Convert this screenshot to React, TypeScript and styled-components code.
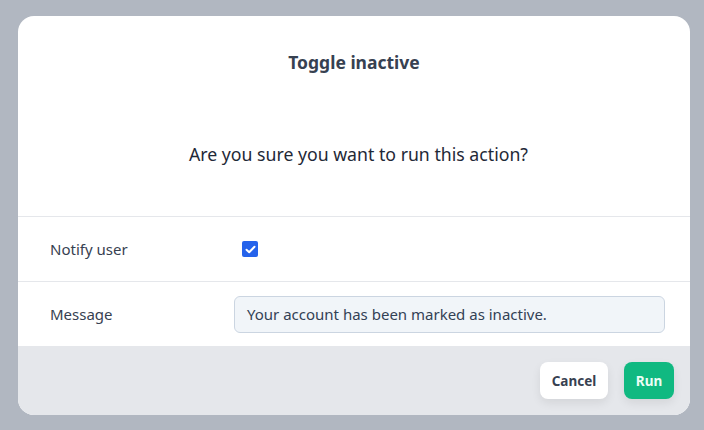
import React from "react";
import styled, { createGlobalStyle } from "styled-components";

const Global = createGlobalStyle`
  html, body { margin: 0; padding: 0; }
  body {
    background: #b1b7c1;
    font-family: "Noto Sans", "Open Sans", sans-serif;
    width: 704px;
    height: 430px;
    overflow: hidden;
  }
`;

const Backdrop = styled.div`
  padding: 16px 14px 15px 18px;
  box-sizing: border-box;
  height: 430px;
`;

const Modal = styled.div`
  width: 672px;
  height: 399px;
  background: #ffffff;
  border-radius: 16px;
  overflow: hidden;
  display: flex;
  flex-direction: column;
`;

const Top = styled.div`
  height: 201px;
  box-sizing: border-box;
  padding-top: 34px;
  display: flex;
  flex-direction: column;
  align-items: center;
  border-bottom: 1px solid #e5e7eb;
`;

const Title = styled.h2`
  margin: 0;
  font-size: 17.5px;
  line-height: 24px;
  font-weight: 700;
  color: #374151;
`;

const Question = styled.p`
  margin: 68px 0 0;
  padding-left: 9px;
  font-size: 17.7px;
  line-height: 24px;
  color: #1f2937;
`;

const Row = styled.div<{ $last?: boolean }>`
  height: ${(p) => (p.$last ? "64px" : "65px")};
  box-sizing: border-box;
  display: grid;
  grid-template-columns: 184px 1fr;
  align-items: center;
  padding: 0 25px 0 32px;
  border-bottom: ${(p) => (p.$last ? "none" : "1px solid #e5e7eb")};
`;

const Label = styled.span`
  font-size: 15px;
  color: #374151;
`;

const Check = styled.span`
  margin-left: 8px;
  width: 16px;
  height: 16px;
  border-radius: 2px;
  background: #2563eb;
  display: flex;
  align-items: center;
  justify-content: center;
`;

const Input = styled.div`
  height: 37px;
  box-sizing: border-box;
  border: 1px solid #cbd5e1;
  border-radius: 6px;
  background: #f1f5f9;
  padding: 0 12px;
  display: flex;
  align-items: center;
  font-size: 15px;
  color: #334155;
`;

const Footer = styled.div`
  flex: 1;
  background: #e5e7eb;
  display: flex;
  justify-content: flex-end;
  align-items: center;
  gap: 16px;
  padding: 0 16px;
`;

const Button = styled.button<{ $primary?: boolean }>`
  height: 37px;
  padding: 0;
  width: ${(p) => (p.$primary ? "50px" : "68px")};
  border: none;
  border-radius: 8px;
  font-family: inherit;
  font-size: 13.5px;
  font-weight: 700;
  background: ${(p) => (p.$primary ? "#10b981" : "#ffffff")};
  color: ${(p) => (p.$primary ? "#ecfdf5" : "#374151")};
  box-shadow: 0 4px 10px rgba(0, 0, 0, 0.08);
`;

export default function App() {
  return (
    <>
      <Global />
      <Backdrop>
        <Modal>
          <Top>
            <Title>Toggle inactive</Title>
            <Question>Are you sure you want to run this action?</Question>
          </Top>
          <Row>
            <Label>Notify user</Label>
            <Check>
              <svg width="11" height="9" viewBox="0 0 11 9">
                <path d="M1.5 4.8 L4.2 7.3 L9.5 1.8" fill="none" stroke="#fff" strokeWidth="2" strokeLinecap="round" strokeLinejoin="round" />
              </svg>
            </Check>
          </Row>
          <Row $last>
            <Label>Message</Label>
            <Input>Your account has been marked as inactive.</Input>
          </Row>
          <Footer>
            <Button>Cancel</Button>
            <Button $primary>Run</Button>
          </Footer>
        </Modal>
      </Backdrop>
    </>
  );
}
